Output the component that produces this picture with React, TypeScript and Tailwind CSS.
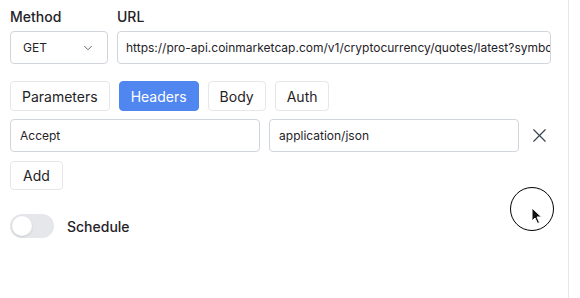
import { X, ChevronDown } from 'lucide-react';

const tabs = ['Parameters', 'Headers', 'Body', 'Auth'];

export default function App() {
  return (
    <div className="relative w-[580px] h-[298px] bg-white overflow-hidden" style={{ fontFamily: 'Inter, "Liberation Sans", sans-serif' }}>
      <div className="w-[569px] h-[298px] border-r border-gray-200 pl-[10px] pr-[17px] pt-[8px] text-[#1f2328]">
        <div className="flex gap-[9px]">
          <div className="w-[98px] shrink-0">
            <label className="block text-[14px] font-medium leading-[18px] mb-[5px]">Method</label>
            <div className="h-[33px] border border-gray-300 rounded-[4px] flex items-center justify-between pl-[12px] pr-[12px] text-[12px]">
              <span>GET</span>
              <ChevronDown size={14} strokeWidth={1.5} className="text-gray-600" />
            </div>
          </div>
          <div className="flex-1 min-w-0">
            <label className="block text-[14px] font-medium leading-[18px] mb-[5px]">URL</label>
            <div className="h-[33px] border border-gray-300 rounded-[4px] flex items-center pl-[8px] text-[12px] overflow-hidden whitespace-nowrap">
              https://pro-api.coinmarketcap.com/v1/cryptocurrency/quotes/latest?symbol=BTC
            </div>
          </div>
        </div>

        <div className="flex gap-[9px] mt-[17px]">
          {tabs.map(t => (
            <button key={t}
              className={`h-[30px] px-[11px] rounded-[4px] text-[14px] border ${t === 'Headers' ? 'bg-[#4f86f0] border-[#4f86f0] text-white' : 'bg-white border-gray-200 text-[#1f2328]'}`}>
              {t}
            </button>
          ))}
        </div>

        <div className="flex items-center gap-[9px] mt-[8px]">
          <div className="w-[251px] h-[33px] border border-gray-300 rounded-[4px] flex items-center pl-[9px] text-[12px]">Accept</div>
          <div className="w-[251px] h-[33px] border border-gray-300 rounded-[4px] flex items-center pl-[9px] text-[12px]">application/json</div>
          <X size={23} strokeWidth={1.2} className="text-gray-700" />
        </div>

        <button className="mt-[9px] h-[29px] px-[12px] rounded-[4px] border border-gray-200 text-[14px]">Add</button>

        <div className="flex items-center gap-[13px] mt-[24px]">
          <div className="w-[44px] h-[24px] rounded-full bg-gray-200 p-[2px] flex items-center">
            <div className="w-[20px] h-[20px] rounded-full bg-white shadow-sm" />
          </div>
          <span className="text-[14px] font-medium">Schedule</span>
        </div>
      </div>

      <div className="absolute left-[510px] top-[187px] w-[44px] h-[44px] rounded-full border-[1.5px] border-black" />
      <svg className="absolute left-[531px] top-[207px]" width="12" height="18" viewBox="0 0 12 18">
        <path d="M1 1 L1 14 L4 11 L6.5 16.5 L8.5 15.5 L6 10 L10.5 10 Z" fill="#111" stroke="#fff" strokeWidth="1" />
      </svg>
    </div>
  );
}
